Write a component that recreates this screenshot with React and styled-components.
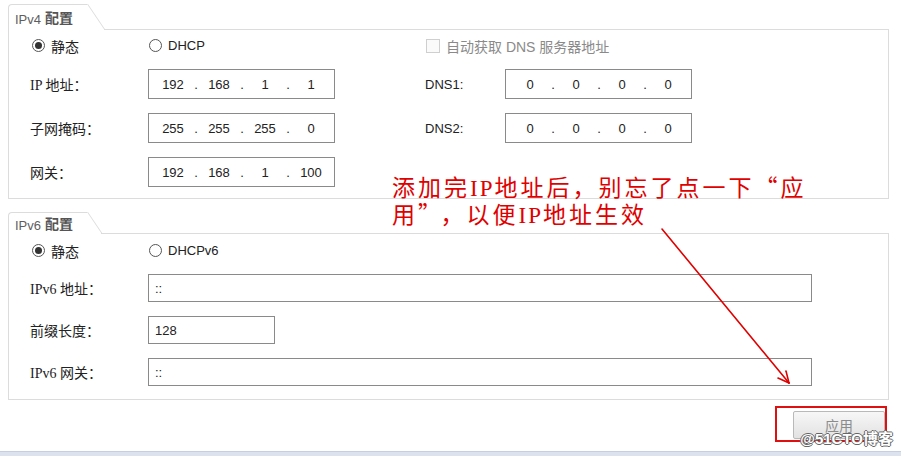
import React from 'react';
import styled, { createGlobalStyle } from 'styled-components';

const ui = `"Liberation Sans", "Noto Sans CJK SC", sans-serif`;
const line = '#dcdcdc';

const GlobalStyle = createGlobalStyle`
  html, body {
    margin: 0;
    padding: 0;
    background: #fff;
  }
  body {
    font-family: ${ui};
    color: #222;
  }
`;

const Page = styled.div`
  position: relative;
  width: 901px;
  height: 456px;
  overflow: hidden;
  display: flex;
  flex-direction: column;
  background: #fff;
`;

const Group = styled.section`
  margin: ${(p) => p.$top}px 0 0 8px;
  width: 881px;
`;

const Header = styled.div`
  display: flex;
  height: ${(p) => p.$h}px;
`;

const Tab = styled.div`
  width: 79px;
  display: flex;
  align-items: flex-end;
  padding: 0 0 ${(p) => p.$pb}px 6px;
  box-sizing: border-box;
  border-top: 1px solid ${line};
  border-left: 1px solid ${line};
  border-top-left-radius: 4px;
  font-size: 13px;
  color: #5e5e5e;
  white-space: nowrap;
`;

const TabStrong = styled.b`
  margin-left: 4px;
  font-size: 14px;
  font-weight: 700;
  color: #555;
`;

const Slant = styled.span`
  position: relative;
  width: ${(p) => p.$w}px;
  border-bottom: 1px solid transparent;

  &::before {
    content: '';
    position: absolute;
    left: 0;
    top: 0;
    bottom: 0;
    border-left: 1px solid ${line};
    transform-origin: top left;
    transform: skewX(34deg);
  }
`;

const Filler = styled.div`
  flex: 1;
  border-bottom: 1px solid ${line};
`;

const Panel = styled.div`
  display: flex;
  flex-direction: column;
  gap: 14px;
  padding: ${(p) => p.$pt}px 0 ${(p) => p.$pb}px 21px;
  border: 1px solid ${line};
  border-top: none;
`;

const RadioRow = styled.div`
  display: flex;
  align-items: center;
  height: 19px;
  font-size: 14px;
`;

const Choice = styled.label`
  display: flex;
  align-items: center;
  gap: 6px;
  width: ${(p) => p.$w || 'auto'};
  margin-left: ${(p) => p.$ml || 0}px;
  color: ${(p) => (p.$disabled ? '#8a8a8a' : '#222')};
  font-size: ${(p) => p.$fs || 14}px;
`;

const Radio = styled.span`
  position: relative;
  width: 11px;
  height: 11px;
  border: 1px solid #555;
  border-radius: 50%;
  background: #fff;

  &::after {
    content: '';
    display: ${(p) => (p.$checked ? 'block' : 'none')};
    position: absolute;
    left: 2px;
    top: 2px;
    width: 7px;
    height: 7px;
    border-radius: 50%;
    background: #333;
  }
`;

const Check = styled.span`
  width: 12px;
  height: 12px;
  border: 1px solid #cfcfcf;
  background: #fafafa;
`;

const Row = styled.div`
  display: flex;
  align-items: center;
`;

const Label = styled.span`
  width: ${(p) => p.$w}px;
  flex: none;
  font-size: ${(p) => p.$fs || 14}px;
  font-family: ${(p) => (p.$serif ? `"Liberation Serif", "Noto Sans CJK SC", serif` : ui)};
  color: #222;
`;

const Box = styled.div`
  box-sizing: border-box;
  width: ${(p) => p.$w}px;
  height: ${(p) => p.$h}px;
  flex: none;
  display: flex;
  align-items: center;
  padding-left: ${(p) => p.$pl ?? 6}px;
  border: 1px solid #8a8a8a;
  background: #fff;
  font-size: 13px;
  color: #222;
`;

const Octet = styled.span`
  width: 42px;
  text-align: center;
`;

const Dot = styled.span`
  width: 4px;
  text-align: center;
`;

const Spacer = styled.span`
  width: ${(p) => p.$w}px;
  flex: none;
`;

const Actions = styled.div`
  display: flex;
  justify-content: flex-end;
  margin: 6px 14px 0 0;
`;

const Frame = styled.div`
  border: 2px solid #e01010;
  padding: 3px 0 1px 16px;
`;

const Button = styled.button`
  width: 92px;
  height: 28px;
  border: 1px solid #b9b9b9;
  border-radius: 2px;
  background: linear-gradient(#f7f7f7, #e2e2e2);
  font-family: ${ui};
  font-size: 14px;
  color: #8c8c8c;
`;

const Strip = styled.div`
  margin-top: auto;
  height: 4px;
  border-top: 1px solid #c5cfdf;
  background: #dde3ee;
`;

const Note = styled.div`
  position: absolute;
  left: 392px;
  top: 174px;
  font-family: "Noto Sans CJK SC", serif;
  font-size: 23px;
  line-height: 24px;
  letter-spacing: 3px;
  color: #e00000;
  white-space: nowrap;
`;

const Latin = styled.span`
  font-family: "Liberation Serif", serif;
  letter-spacing: 2px;
`;

const Quote = styled.span`
  margin-right: 8px;
`;

const Arrow = styled.svg`
  position: absolute;
  left: 0;
  top: 0;
  pointer-events: none;
`;

const Watermark = styled.div`
  position: absolute;
  right: 8px;
  top: 427px;
  font-family: ${ui};
  font-size: 15px;
  font-weight: 700;
  color: #fff;
  text-shadow: -1px 0 #666, 1px 0 #666, 0 -1px #666, 0 1px #666;
`;

const IpBox = ({ parts, w = 187 }) => (
  <Box $w={w} $h={30} $pl={3}>
    {parts.map((p, i) => (
      <React.Fragment key={i}>
        {i > 0 && <Dot>.</Dot>}
        <Octet>{p}</Octet>
      </React.Fragment>
    ))}
  </Box>
);

const GroupHeader = ({ title, h, pb }) => (
  <Header $h={h}>
    <Tab $pb={pb}>
      {title}
      <TabStrong>配置</TabStrong>
    </Tab>
    <Slant $w={Math.round((h - 1) * 0.675)} />
    <Filler />
  </Header>
);

export default function App() {
  return (
    <Page>
      <GlobalStyle />

      <Group $top={4}>
        <GroupHeader title="IPv4" h={26} pb={3} />
        <Panel $pt={6} $pb={11}>
          <RadioRow>
            <Choice $w="117px" $ml={2}>
              <Radio $checked />
              静态
            </Choice>
            <Choice $w="277px" $fs={13}>
              <Radio />
              DHCP
            </Choice>
            <Choice $disabled>
              <Check />
              自动获取 DNS 服务器地址
            </Choice>
          </RadioRow>
          <Row>
            <Label $w={118} $serif>IP 地址：</Label>
            <IpBox parts={['192', '168', '1', '1']} />
            <Spacer $w={90} />
            <Label $w={80} $fs={13}>DNS1:</Label>
            <IpBox parts={['0', '0', '0', '0']} />
          </Row>
          <Row>
            <Label $w={118}>子网掩码：</Label>
            <IpBox parts={['255', '255', '255', '0']} />
            <Spacer $w={90} />
            <Label $w={80} $fs={13}>DNS2:</Label>
            <IpBox parts={['0', '0', '0', '0']} />
          </Row>
          <Row>
            <Label $w={118}>网关：</Label>
            <IpBox parts={['192', '168', '1', '100']} />
          </Row>
        </Panel>
      </Group>

      <Group $top={13}>
        <GroupHeader title="IPv6" h={22} pb={1} />
        <Panel $pt={7} $pb={13}>
          <RadioRow>
            <Choice $w="117px" $ml={2}>
              <Radio $checked />
              静态
            </Choice>
            <Choice $fs={13}>
              <Radio />
              DHCPv6
            </Choice>
          </RadioRow>
          <Row>
            <Label $w={118} $serif>IPv6 地址：</Label>
            <Box $w={664} $h={28}>::</Box>
          </Row>
          <Row>
            <Label $w={118}>前缀长度：</Label>
            <Box $w={127} $h={28}>128</Box>
          </Row>
          <Row>
            <Label $w={118} $serif>IPv6 网关：</Label>
            <Box $w={664} $h={28}>::</Box>
          </Row>
        </Panel>
      </Group>

      <Actions>
        <Frame>
          <Button type="button">应用</Button>
        </Frame>
      </Actions>

      <Strip />

      <Note>
        添加完<Latin>IP</Latin>地址后，别忘了点一下“应
        <br />
        用<Quote>”</Quote>，以便<Latin>IP</Latin>地址生效
      </Note>

      <Arrow width="901" height="456" viewBox="0 0 901 456">
        <g stroke="#e00000" strokeWidth="1.6" fill="none" strokeLinecap="round">
          <line x1="662" y1="229" x2="789" y2="383" />
          <line x1="789" y1="383" x2="786" y2="371" />
          <line x1="789" y1="383" x2="778" y2="378" />
        </g>
      </Arrow>

      <Watermark>@51CTO博客</Watermark>
    </Page>
  );
}
